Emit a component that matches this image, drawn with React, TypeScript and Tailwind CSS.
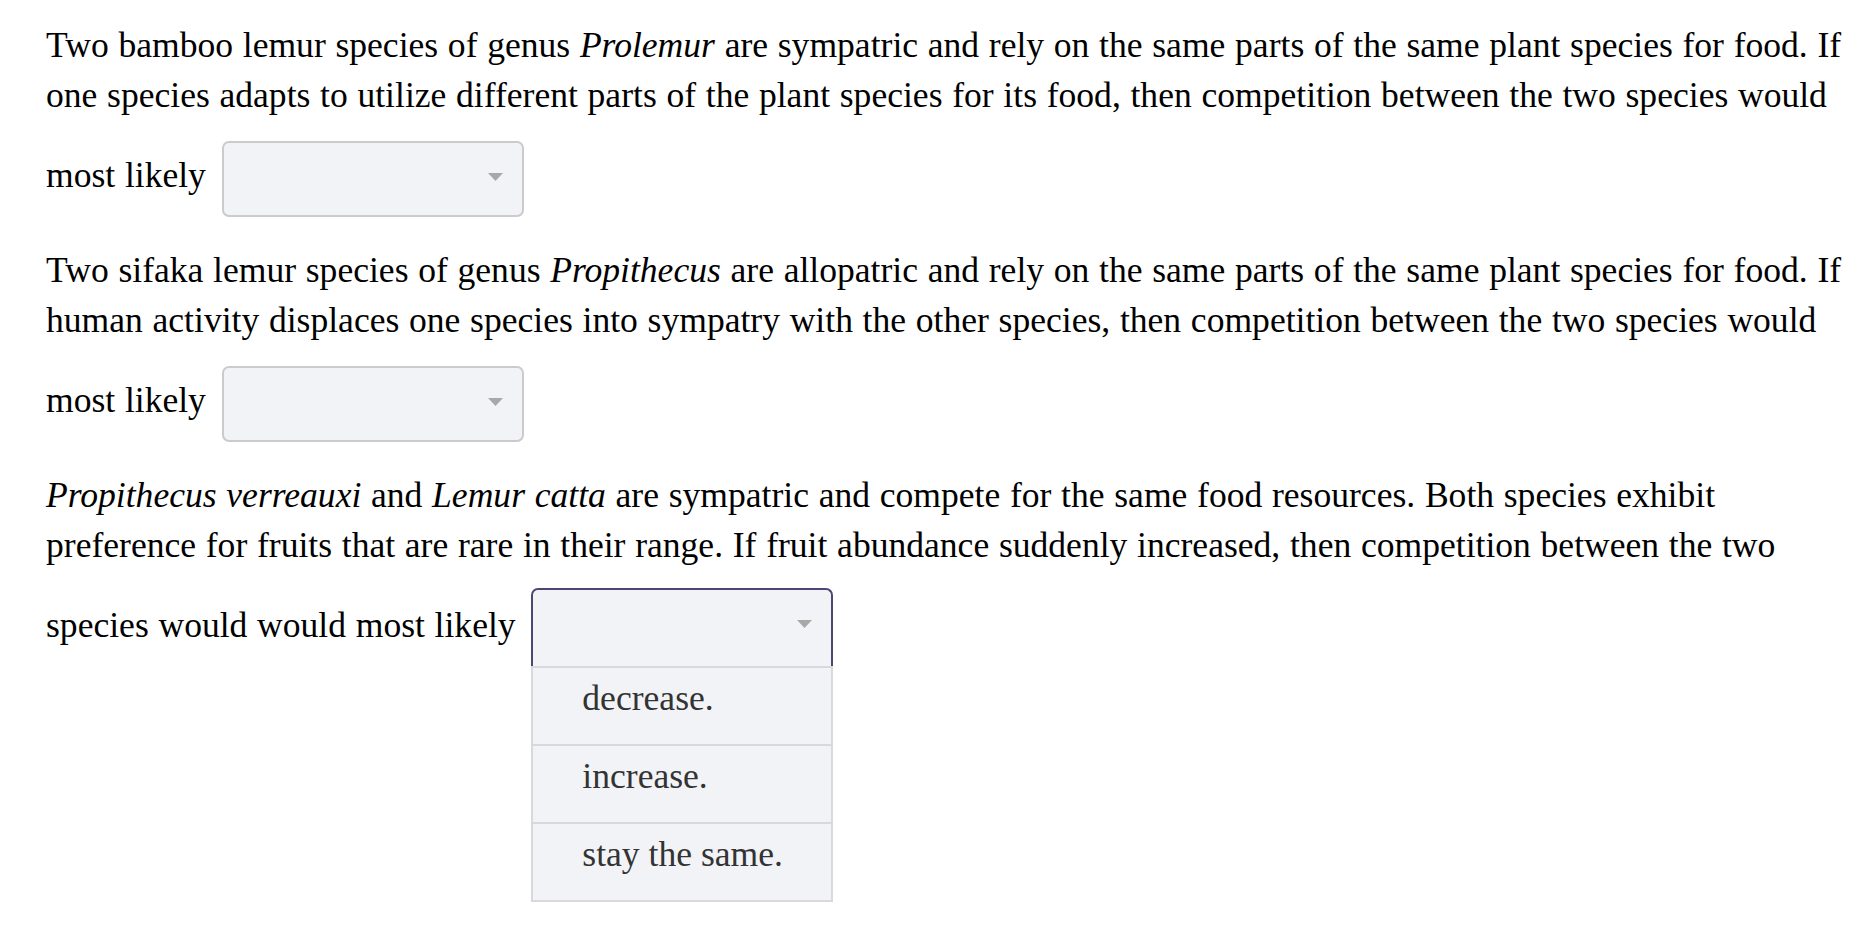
import {useState} from "react";

type Para = {
    id: string
    body: React.ReactNode
    open?: boolean
}

const options = ["decrease.", "increase.", "stay the same."]

function Arrow() {
    return <svg width="15" height="8" viewBox="0 0 15 8" className="absolute right-[19px] top-[30px]">
        <polygon points="0,0 15,0 7.5,8" fill="#a8a8a8"/>
    </svg>
}

function Dropdown({open}: { open?: boolean }) {
    if (!open) {
        return <span
            className="relative ml-[6px] inline-block h-[76px] w-[302px] align-middle my-[21px] rounded-[7px] border-2 border-[#cbcbcb] bg-[#f2f3f7]">
            <Arrow/>
        </span>
    }
    return <span className="relative ml-[6px] inline-block w-[302px] align-middle mt-[18px] mb-[21px]">
        <span
            className="relative block h-[78px] rounded-t-[7px] border-2 border-b-0 border-[#4c4673] bg-[#f2f3f7]">
            <Arrow/>
        </span>
        <span className="absolute left-0 top-full z-10 block w-full [word-spacing:0px]">
            {options.map((o, key) =>
                <span key={key}
                      className="block h-[78px] border-x-2 border-t-2 border-[#d9d9dc] bg-[#f2f3f7] pl-[49px] leading-[60px] text-[#333333] last:border-b-2 last:h-[80px]">
                    {o}
                </span>)}
        </span>
    </span>
}

export default function App() {
    const [paras] = useState<Para[]>([
        {
            id: "p1",
            body: <>Two bamboo lemur species of genus <i>Prolemur</i> are sympatric and rely on the same parts of the
                same plant species for food. If one species adapts to utilize different parts of the plant species for
                its food, then competition between the two species would most likely</>
        },
        {
            id: "p2",
            body: <>Two sifaka lemur species of genus <i>Propithecus</i> are allopatric and rely on the same parts of
                the same plant species for food. If human activity displaces one species into sympatry with the other
                species, then competition between the two species would most likely</>
        },
        {
            id: "p3",
            body: <><i>Propithecus verreauxi</i> and <i>Lemur catta</i> are sympatric and compete for the same food
                resources. Both species exhibit preference for fruits that are rare in their range. If fruit abundance
                suddenly increased, then competition between the two species would would most likely</>,
            open: true
        },
    ])

    return <div
        className="min-h-[936px] bg-white pl-[46px] pr-[12px] pt-[20px] font-['Liberation_Serif',serif] text-[35.6px] leading-[50px] text-black [word-spacing:0.8px]">
        {
            paras.map(p => <p key={p.id} className="mb-[7px]">
                {p.body} <Dropdown open={p.open}/>
            </p>)
        }
    </div>
}
